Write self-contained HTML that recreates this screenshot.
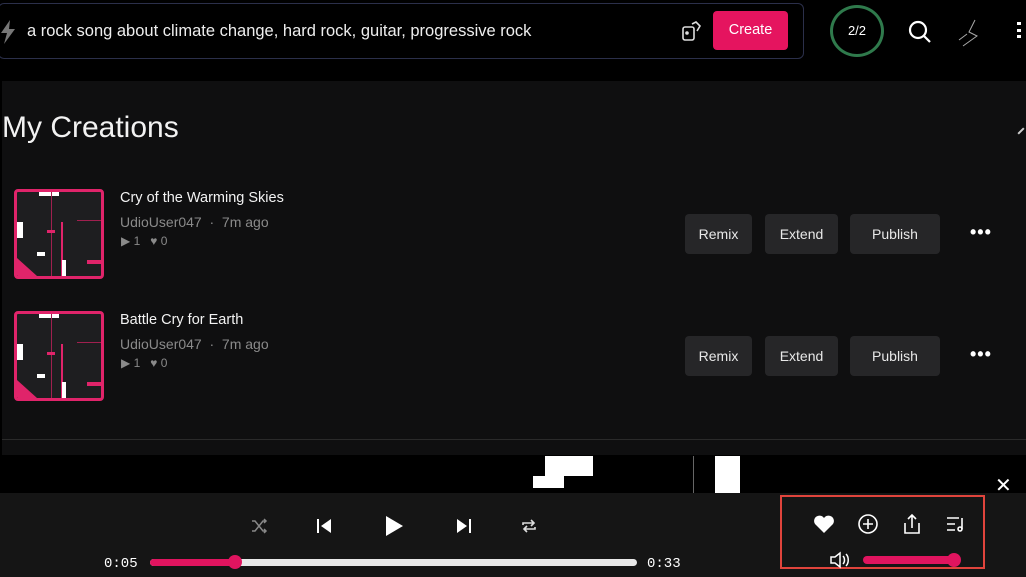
<!DOCTYPE html>
<html><head><style>
*{margin:0;padding:0;box-sizing:border-box}
body{width:1026px;height:577px;overflow:hidden;background:#000;font-family:"Liberation Sans",sans-serif;color:#fff;position:relative}
.a{position:absolute}
.btn{position:absolute;background:#262628;border-radius:4px;font-size:14px;color:#e8e8e8;text-align:center;line-height:40px;height:40px}
.t{font-size:14.5px;color:#f2f2f2}
.u{font-size:14px;color:#8a8a8a}
.s{font-size:12px;color:#8a8a8a}
.art{position:absolute;width:90px;height:90px;border:3px solid #e0246a;border-radius:4px;background:#1e1e20;overflow:hidden}
</style></head><body>
<div class="a" style="left:-2px;top:3px;width:806px;height:56px;border:1px solid #2b2f4a;border-radius:6px;background:#000"></div>
<svg class="a" style="left:0;top:20px" width="16" height="24"><path d="M10 0 L1 13 H7 L4 24 L15 9 H9 Z" fill="#777"/></svg>
<div class="a" style="left:27px;top:22px;font-size:16.5px;color:#eee">a rock song about climate change, hard rock, guitar, progressive rock</div>
<svg class="a" style="left:680px;top:20px" width="22" height="22" fill="none" stroke="#ddd" stroke-width="1.6"><rect x="3" y="7" width="11" height="13" rx="2"/><circle cx="7" cy="13" r="1" fill="#ddd"/><path d="M12 4 l4-2 4 4 -3 5"/></svg>
<div class="a" style="left:713px;top:11px;width:75px;height:39px;background:#e5145f;border-radius:4px;font-size:14.5px;text-align:center;line-height:39px">Create</div>
<div class="a" style="left:830px;top:5px;width:54px;height:52px;border:3px solid #2f7a4c;border-radius:50%;font-size:13px;text-align:center;line-height:46px">2/2</div>
<svg class="a" style="left:907px;top:19px" width="26" height="26" fill="none" stroke="#fff" stroke-width="2.2"><circle cx="11" cy="11" r="8"/><path d="M17 17l6 6"/></svg>
<svg class="a" style="left:955px;top:18px" width="30" height="30" stroke="#aaa" fill="none"><path d="M20 2 L14 14 L22 18 L8 28 M4 22 L12 16"/></svg>
<div class="a" style="left:1017px;top:22px;width:4px;height:16px;border-top:3px solid #fff;border-bottom:3px solid #fff"></div>
<div class="a" style="left:1017px;top:29px;width:4px;height:3px;background:#fff"></div>

<div class="a" style="left:2px;top:81px;width:1024px;height:374px;background:#0f0f10"></div>
<div class="a" style="left:2px;top:111px;font-size:30px;color:#f2f2f2">My Creations</div>
<div class="a" style="left:1017px;top:130px;width:8px;height:2px;background:#ccc;transform:rotate(-45deg)"></div>
<div class="a" style="left:2px;top:439px;width:1024px;height:1px;background:#2a2a2a"></div>

<div class="art" style="left:14px;top:189px"><div class="a" style="left:22px;top:0;width:20px;height:4px;background:#fff"></div><div class="a" style="left:0;top:30px;width:6px;height:16px;background:#fff"></div><div class="a" style="left:34px;top:0;width:1px;height:90px;background:#a0204f"></div><div class="a" style="left:44px;top:30px;width:2px;height:54px;background:#e0246a"></div><div class="a" style="left:60px;top:28px;width:30px;height:1px;background:#a0204f"></div><div class="a" style="left:30px;top:38px;width:8px;height:3px;background:#e0246a"></div><div class="a" style="left:20px;top:60px;width:8px;height:4px;background:#fff"></div><div class="a" style="left:0;top:66px;width:20px;height:18px;background:#e0246a;clip-path:polygon(0 0,0 100%,100% 100%)"></div><div class="a" style="left:45px;top:68px;width:4px;height:16px;background:#fff"></div><div class="a" style="left:70px;top:68px;width:14px;height:4px;background:#e0246a"></div></div>
<div class="t a" style="left:120px;top:190px">Cry of the Warming Skies</div>
<div class="u a" style="left:120px;top:214px">UdioUser047 &nbsp;·&nbsp; 7m ago</div>
<div class="s a" style="left:121px;top:234px">▶ 1 &nbsp; ♥ 0</div>
<div class="btn" style="left:685px;top:214px;width:67px">Remix</div>
<div class="btn" style="left:765px;top:214px;width:73px">Extend</div>
<div class="btn" style="left:850px;top:214px;width:90px">Publish</div>
<div class="a" style="left:970px;top:222px;font-size:18px;letter-spacing:1px;font-weight:bold">•••</div>

<div class="art" style="left:14px;top:311px"><div class="a" style="left:22px;top:0;width:20px;height:4px;background:#fff"></div><div class="a" style="left:0;top:30px;width:6px;height:16px;background:#fff"></div><div class="a" style="left:34px;top:0;width:1px;height:90px;background:#a0204f"></div><div class="a" style="left:44px;top:30px;width:2px;height:54px;background:#e0246a"></div><div class="a" style="left:60px;top:28px;width:30px;height:1px;background:#a0204f"></div><div class="a" style="left:30px;top:38px;width:8px;height:3px;background:#e0246a"></div><div class="a" style="left:20px;top:60px;width:8px;height:4px;background:#fff"></div><div class="a" style="left:0;top:66px;width:20px;height:18px;background:#e0246a;clip-path:polygon(0 0,0 100%,100% 100%)"></div><div class="a" style="left:45px;top:68px;width:4px;height:16px;background:#fff"></div><div class="a" style="left:70px;top:68px;width:14px;height:4px;background:#e0246a"></div></div>
<div class="t a" style="left:120px;top:312px">Battle Cry for Earth</div>
<div class="u a" style="left:120px;top:336px">UdioUser047 &nbsp;·&nbsp; 7m ago</div>
<div class="s a" style="left:121px;top:356px">▶ 1 &nbsp; ♥ 0</div>
<div class="btn" style="left:685px;top:336px;width:67px">Remix</div>
<div class="btn" style="left:765px;top:336px;width:73px">Extend</div>
<div class="btn" style="left:850px;top:336px;width:90px">Publish</div>
<div class="a" style="left:970px;top:344px;font-size:18px;letter-spacing:1px;font-weight:bold">•••</div>

<div class="a" style="left:545px;top:456px;width:48px;height:20px;background:#fff"></div>
<div class="a" style="left:533px;top:476px;width:31px;height:12px;background:#fff"></div>
<div class="a" style="left:715px;top:456px;width:25px;height:37px;background:#fff"></div>
<div class="a" style="left:693px;top:456px;width:1px;height:37px;background:#666"></div>
<div class="a" style="left:995px;top:473px;font-size:20px">✕</div>

<div class="a" style="left:0;top:493px;width:1026px;height:84px;background:#151515"></div>
<svg class="a" style="left:250px;top:517px" width="18" height="18" stroke="#888" fill="none" stroke-width="1.5"><path d="M2 4h3l8 10h3M2 14h3l8-10h3M14 2l2 2-2 2M14 12l2 2-2 2"/></svg>
<svg class="a" style="left:315px;top:517px" width="18" height="18" fill="#fff"><rect x="2" y="2" width="2" height="14"/><path d="M16 2v14L6 9z"/></svg>
<svg class="a" style="left:384px;top:514px" width="20" height="24" fill="#fff"><path d="M2 2v20l17-10z"/></svg>
<svg class="a" style="left:455px;top:517px" width="18" height="18" fill="#fff"><rect x="14" y="2" width="2" height="14"/><path d="M2 2v14l10-7z"/></svg>
<svg class="a" style="left:520px;top:517px" width="18" height="18" stroke="#ddd" fill="none" stroke-width="1.6"><path d="M3 8v-2h11M11 3l3 3-3 3M15 10v2H4M7 15l-3-3 3-3"/></svg>
<div class="a" style="left:104px;top:556px;font-family:'Liberation Mono',monospace;font-size:14px">0:05</div>
<div class="a" style="left:150px;top:559px;width:487px;height:7px;background:#e8e8e8;border-radius:4px"></div>
<div class="a" style="left:150px;top:559px;width:86px;height:7px;background:#e0145f;border-radius:4px"></div>
<div class="a" style="left:228px;top:555px;width:14px;height:14px;background:#e0145f;border-radius:50%"></div>
<div class="a" style="left:647px;top:556px;font-family:'Liberation Mono',monospace;font-size:14px">0:33</div>
<div class="a" style="left:780px;top:495px;width:205px;height:74px;border:2px solid #e0443c"></div>
<svg class="a" style="left:813px;top:514px" width="22" height="20" fill="#fff"><path d="M11 19L2 10A5 5 0 0 1 11 4A5 5 0 0 1 20 10Z"/></svg>
<svg class="a" style="left:857px;top:513px" width="22" height="22" stroke="#fff" fill="none" stroke-width="1.6"><circle cx="11" cy="11" r="9"/><path d="M11 6v10M6 11h10"/></svg>
<svg class="a" style="left:901px;top:512px" width="22" height="24" stroke="#fff" fill="none" stroke-width="1.6"><path d="M11 16V3M7 7l4-4 4 4M4 11v10h14V11"/></svg>
<svg class="a" style="left:945px;top:514px" width="22" height="20" stroke="#fff" fill="none" stroke-width="1.6"><path d="M2 4h12M2 10h8M2 16h8M17 4v11"/><circle cx="15" cy="15" r="2"/></svg>
<svg class="a" style="left:829px;top:550px" width="22" height="20" stroke="#fff" fill="none" stroke-width="1.5"><path d="M2 7h4l5-4v14l-5-4H2z M14 6c2 2 2 6 0 8M17 4c3 3 3 9 0 12"/></svg>
<div class="a" style="left:863px;top:556px;width:94px;height:8px;background:#e0145f;border-radius:4px"></div>
<div class="a" style="left:947px;top:553px;width:14px;height:14px;background:#e0145f;border-radius:50%"></div>
</body></html>
